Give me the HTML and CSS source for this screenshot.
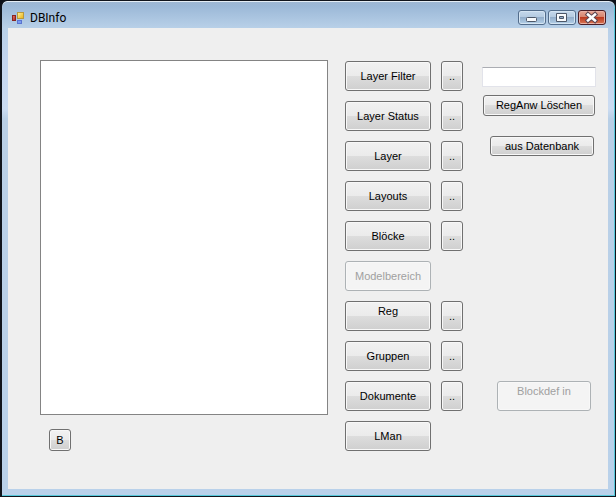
FILE: index.html
```html
<!DOCTYPE html>
<html lang="de">
<head>
<meta charset="utf-8">
<meta name="viewport" content="width=device-width, initial-scale=1">
<title>DBInfo</title>
<link rel="stylesheet" href="styles.css">
</head>
<body>
<div class="window">
  <header class="titlebar">
    <svg class="app-icon" viewBox="0 0 13 12" aria-hidden="true">
      <defs>
        <linearGradient id="yellow" x1="0" y1="0" x2="1" y2="1"><stop offset="0" stop-color="#fff3a0"/><stop offset="1" stop-color="#e8b010"/></linearGradient>
        <linearGradient id="red" x1="0" y1="0" x2="1" y2="1"><stop offset="0" stop-color="#e88070"/><stop offset="1" stop-color="#a81c18"/></linearGradient>
      </defs>
      <rect x="0.5" y="3.5" width="3" height="5" fill="url(#red)" stroke="#8a2420"/>
      <rect x="5.5" y="0.5" width="6" height="6" fill="url(#yellow)" stroke="#b8983c"/>
      <rect x="5.5" y="8.5" width="4" height="3" fill="#7a9cf0" stroke="#5a74d0"/>
    </svg>
    <h1 class="title">DBInfo</h1>
    <div class="controls">
      <button class="control" type="button" aria-label="Minimieren">
        <svg viewBox="0 0 28 15"><rect x="8.5" y="7.500" width="10" height="4" rx="1" fill="#f8fafc" stroke="#4c5768"/></svg>
      </button>
      <button class="control" type="button" aria-label="Maximieren">
        <svg viewBox="0 0 28 15"><path fill-rule="evenodd" d="M8.500 3.500h10v8h-10zM11.500 6.500h4v2h-4z" fill="#f8fafc" stroke="#4c5768" stroke-linejoin="round"/></svg>
      </button>
      <button class="control control-close" type="button" aria-label="Schließen">
        <svg viewBox="0 0 28 15"><path d="M10 4.500L17 10.500M17 4.500L10 10.500" fill="none" stroke="#5c4450" stroke-width="4.500" stroke-linecap="square"/><path d="M10 4.500L17 10.500M17 4.500L10 10.500" fill="none" stroke="#fff" stroke-width="2.500" stroke-linecap="square"/></svg>
      </button>
    </div>
  </header>
  <main class="client">
    <section class="list-column">
      <select class="listbox" size="20" aria-label="Einträge"></select>
      <button class="button small" type="button">B</button>
    </section>
    <section class="actions">
      <button class="button" type="button">Layer Filter</button><button class="button" type="button">..</button>
      <button class="button" type="button">Layer Status</button><button class="button" type="button">..</button>
      <button class="button" type="button">Layer</button><button class="button" type="button">..</button>
      <button class="button" type="button">Layouts</button><button class="button" type="button">..</button>
      <button class="button" type="button">Blöcke</button><button class="button" type="button">..</button>
      <button class="button first" type="button" disabled>Modelbereich</button>
      <button class="button first top" type="button">Reg</button><button class="button" type="button">..</button>
      <button class="button" type="button">Gruppen</button><button class="button" type="button">..</button>
      <button class="button" type="button">Dokumente</button><button class="button" type="button">..</button>
      <button class="button" type="button">LMan</button>
    </section>
    <section class="side">
      <input class="field" type="text" aria-label="RegAnw">
      <button class="button delete" type="button">RegAnw Löschen</button>
      <button class="button database" type="button">aus Datenbank</button>
      <button class="button top blockdef" type="button" disabled>Blockdef in</button>
    </section>
  </main>
</div>
</body>
</html>
```

FILE: styles.css
```css
* { box-sizing: border-box; }

body {
  margin: 0;
  background: #0c1018;
  font-family: "Liberation Sans", Arial, sans-serif;
  font-size: 11px;
  color: #000;
}

.window {
  display: flex;
  flex-direction: column;
  min-height: 100vh;
  padding: 0 7px 7px 6px;
  border: 1px solid #10141c;
  border-left-width: 2px;
  border-radius: 7px 7px 0 0;
  background: linear-gradient(#9fb7d2 0, #9bb8d7 5px, #b8d0e8 27px, #c3d5ef 60px, #cbdcf2 108px, #b9cfe6 118px, #b9d1ea 100%);
  box-shadow: inset 0 1px #e4edf5, inset -1px -1px #56c8da;
}

.titlebar {
  display: flex;
  align-items: center;
  height: 27px;
  padding: 6px 2px 0 4px;
}

.app-icon {
  width: 13px;
  height: 12px;
}

.title {
  flex: 1;
  margin: 0 0 0 5px;
  font: 12px/16px Roboto, "Open Sans", sans-serif;
}

.controls {
  display: flex;
  gap: 2px;
}

.control {
  width: 28px;
  height: 15px;
  padding: 0;
  border: 1px solid #526c8b;
  border-radius: 3px;
  background: linear-gradient(#c4d8ec 0, #b4cae0 48%, #93aecb 50%, #b4d0e8 100%);
  box-shadow: inset 0 0 0 1px #d4e4f2;
}

.control svg {
  display: block;
  width: 28px;
  height: 15px;
  margin: -1px;
}

.control-close {
  border-color: #4a1c24;
  background: linear-gradient(#e6a594 0, #d6826c 48%, #bd3a20 50%, #d77755 100%);
  box-shadow: inset 0 0 0 1px #e8b0a4;
}

.client {
  flex: 1;
  display: flex;
  align-items: flex-start;
  padding: 32px 12px 38px 32px;
  background: #efefef;
}

.list-column {
  flex: 1;
  align-self: stretch;
  display: flex;
  flex-direction: column;
  align-items: flex-start;
  gap: 14px;
}

.listbox {
  flex: 1;
  width: 100%;
  min-height: 120px;
  padding: 0;
  border: 1px solid #848484;
  border-radius: 0;
  background: #fff;
}

.button {
  padding: 0 2px 1px;
  border: 1px solid #707070;
  border-radius: 3px;
  background: linear-gradient(#f2f2f2 0, #ebebeb 49%, #dddddd 50%, #cfcfcf 100%);
  box-shadow: inset 0 0 0 1px #f8f8f8;
  font: 11px/14px "Liberation Sans", Arial, sans-serif;
  color: #000;
  white-space: nowrap;
}

.button:disabled {
  border-color: #adb2b5;
  background: #f4f4f4;
  color: #a0a0a0;
}

.small {
  width: 22px;
  height: 22px;
  margin-left: 9px;
}

.actions {
  display: grid;
  grid-template-columns: 86px 22px;
  grid-auto-rows: 30px;
  gap: 10px;
  margin: 1px 19px 0 17px;
}

.first { grid-column: 1; }

.top { padding-bottom: 10px; }

.side {
  align-self: stretch;
  display: flex;
  flex-direction: column;
  width: 114px;
  padding-top: 7px;
}

.field {
  width: 100%;
  height: 20px;
  padding: 2px 4px;
  border: 1px solid #e2e3ea;
  border-top-color: #abadb3;
  background: #fff;
  font: inherit;
}

.delete {
  height: 21px;
  margin: 8px 1px 0;
}

.database {
  height: 20px;
  margin: 20px 2px 0 8px;
}

.blockdef {
  height: 30px;
  margin: auto 5px 40px 15px;
}
```
